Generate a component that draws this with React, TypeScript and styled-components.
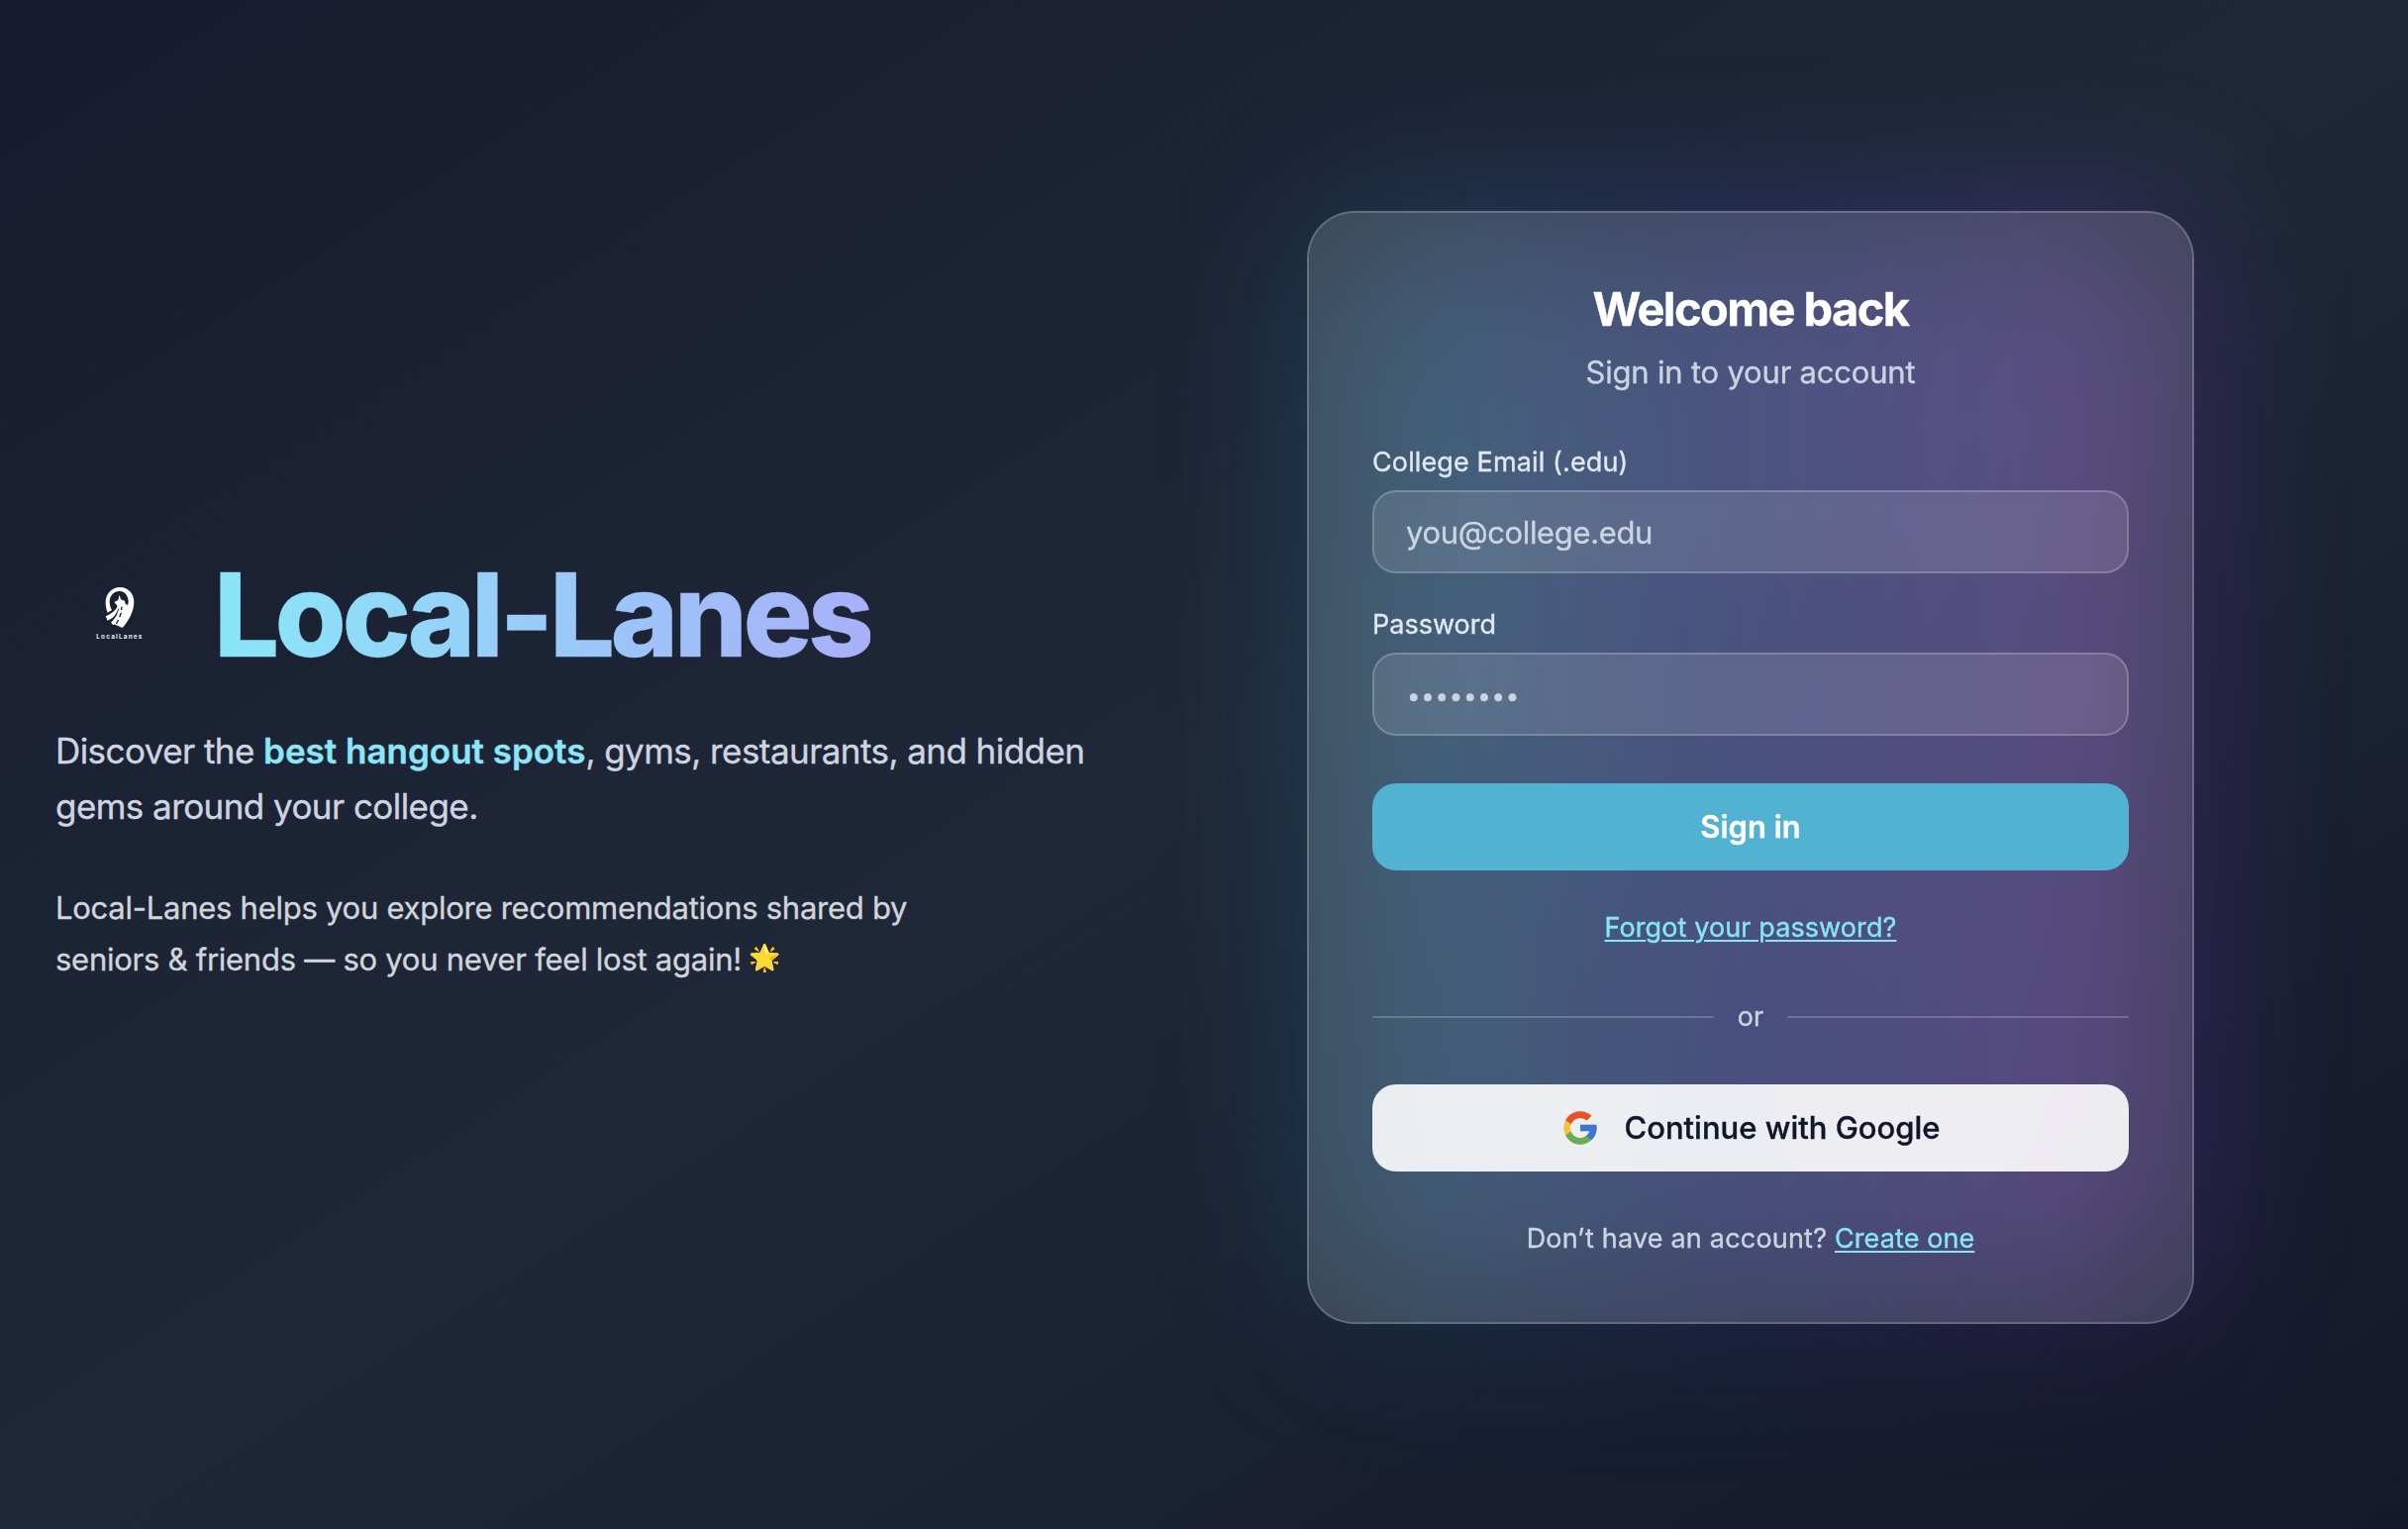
import React from "react";
import styled, { createGlobalStyle } from "styled-components";

const GlobalStyle = createGlobalStyle`
  *, *::before, *::after { box-sizing: border-box; }
  body {
    margin: 0;
    font-family: Inter, "Liberation Sans", "Noto Color Emoji", sans-serif;
    -webkit-text-stroke-width: 0.35px;
    background: #161a2e;
  }
  h1, h2, p { margin: 0; }
`;

const Page = styled.main`
  display: grid;
  grid-template-columns: 1048px 896px;
  justify-content: start;
  column-gap: 216px;
  align-items: center;
  height: 1544px;
  padding: 6px 56px 0;
  overflow: hidden;
  background: linear-gradient(to bottom right, #171b2f 0%, #1f2838 50%, #14182b 100%);
`;

const Intro = styled.section`
  display: flex;
  flex-direction: column;
  padding-top: 2px;
`;

const Brand = styled.div`
  display: flex;
  align-items: center;
  gap: 32px;
  height: 128px;
  margin-bottom: 45px;
`;

const LogoBox = styled.div`
  display: flex;
  align-items: center;
  justify-content: center;
  width: 128px;
  height: 128px;
  padding: 0 0 5px 2px;
`;

const BrandName = styled.h1`
  font-size: 117px;
  line-height: 128px;
  font-weight: 800;
  letter-spacing: -4.6px;
  color: transparent;
  background: linear-gradient(to right, #8ae6f8, #a8b0f8);
  background-clip: text;
  -webkit-background-clip: text;
`;

const Lead = styled.p`
  font-size: 35px;
  line-height: 56px;
  letter-spacing: -0.56px;
  color: #ced5e1;
  margin-bottom: 49px;
`;

const Highlight = styled.strong`
  font-weight: 600;
  letter-spacing: 0;
  color: #8ae6f8;
`;

const Blurb = styled.p`
  font-size: 31px;
  line-height: 52px;
  letter-spacing: -0.26px;
  color: #d1d5db;
`;

const Emoji = styled.span`
  font-size: 26px;
  line-height: 1;
  vertical-align: 4px;
  margin-left: -1px;
`;

const CardWrap = styled.section`
  position: relative;

  &::before {
    content: "";
    position: absolute;
    inset: 12px;
    border-radius: 48px;
    background: linear-gradient(
      to right,
      rgba(44, 204, 240, 0.23),
      rgba(84, 98, 245, 0.28) 48%,
      rgba(165, 72, 245, 0.3)
    );
    filter: blur(78px);
  }
`;

const Card = styled.div`
  position: relative;
  display: flex;
  flex-direction: column;
  height: 1124px;
  padding: 64px;
  border: 2px solid rgba(255, 255, 255, 0.2);
  border-radius: 48px;
  background: rgba(255, 255, 255, 0.14);
  backdrop-filter: blur(32px);
  box-shadow: 0 50px 100px -24px rgba(0, 0, 0, 0.22);
`;

const Header = styled.header`
  display: flex;
  flex-direction: column;
  align-items: center;
  gap: 7px;
  margin-bottom: 47px;
`;

const Heading = styled.h2`
  font-size: 47px;
  line-height: 66px;
  font-weight: 700;
  letter-spacing: -1.6px;
  color: #fff;
`;

const Subheading = styled.p`
  font-size: 31px;
  line-height: 48px;
  letter-spacing: -0.2px;
  color: #cbd5e1;
`;

const Form = styled.form`
  display: flex;
  flex-direction: column;
  gap: 32px;
  margin: 0;
`;

const Field = styled.label<{ $tracking?: number }>`
  display: flex;
  flex-direction: column;
  gap: 8px;
  font-size: 27px;
  line-height: 40px;
  letter-spacing: ${(p) => p.$tracking ?? 0}px;
  color: #e2e8f0;
`;

const Input = styled.input<{ $dots?: boolean }>`
  height: 84px;
  padding: ${(p) => (p.$dots ? "3px 32px 0 33px" : "0 32px")};
  border: 2px solid rgba(255, 255, 255, 0.2);
  border-radius: 24px;
  outline: none;
  background: rgba(255, 255, 255, 0.11);
  font-family: inherit;
  font-size: ${(p) => (p.$dots ? 24 : 31)}px;
  letter-spacing: ${(p) => (p.$dots ? 0.75 : -0.36)}px;
  color: #fff;

  &::placeholder {
    color: #cbd5e1;
    opacity: 1;
  }
`;

const Button = styled.button<{ $variant: "primary" | "light" }>`
  display: flex;
  align-items: center;
  justify-content: center;
  gap: 24px;
  width: 100%;
  height: 88px;
  padding: 0 0 1px;
  border: 0;
  border-radius: 24px;
  font-family: inherit;
  font-size: 31px;
  font-weight: ${(p) => (p.$variant === "primary" ? 600 : 500)};
  color: ${(p) => (p.$variant === "primary" ? "#fff" : "#0f172a")};
  background: ${(p) => (p.$variant === "primary" ? "#51b2d1" : "rgba(255, 255, 255, 0.9)")};
`;

const SubmitRow = styled.div`
  padding-top: 16px;
`;

const Note = styled.p<{ $before: number; $tracking: number }>`
  margin-top: ${(p) => p.$before}px;
  text-align: center;
  font-size: 27px;
  line-height: 40px;
  letter-spacing: ${(p) => p.$tracking}px;
  color: #cbd5e1;
`;

const Link = styled.a`
  color: #86e6f7;
  letter-spacing: 0.1px;
  text-decoration: underline;
  text-decoration-thickness: 2px;
  text-underline-offset: 3px;
`;

const Divider = styled.div`
  display: flex;
  align-items: center;
  gap: 24px;
  margin: 50px 0 48px;
  font-size: 27px;
  line-height: 40px;
  color: #cbd5e1;

  &::before,
  &::after {
    content: "";
    flex: 1;
    height: 2px;
    background: rgba(255, 255, 255, 0.2);
  }
`;

function Logo() {
  return (
    <svg width="54" height="62" viewBox="0 0 162 186" role="img" aria-label="Local Lanes">
      <path
        d="M44 92 C40 82 38 72 38 60 C38 34 58 15 82 15 C108 15 124 36 124 60 C124 90 106 118 91 136 Q88 139 84 136 L62 126 L82 86 L98 78 C106 70 109 60 106 50 C102 34 92 27 80 27 C62 27 50 42 50 58 C50 68 52 76 57 84 Z"
        fill="#fff"
      />
      <path d="M80 38 L84 52 L96 56 L98 66 L104 68 L104 84 L72 84 L74 72 L64 60 L76 54 Z" fill="#fff" />
      <path d="M38 103 C58 94 70 84 76 68 L92 70 L92 84 C84 104 74 118 62 130 L54 122 C64 112 72 102 76 90 C68 102 58 110 44 116 Z" fill="#fff" />
      <path d="M50 120 C62 110 72 96 78 80" stroke="#1b2134" strokeWidth="3" fill="none" />
      <path d="M87 74 L86 84 M85 92 L80 106 M77 114 L70 126" stroke="#1b2134" strokeWidth="4" fill="none" />
      <text
        x="10"
        y="170"
        textLength="138"
        lengthAdjust="spacing"
        fontFamily="Inter, sans-serif"
        fontSize="19"
        fontWeight="700"
        fill="#e8eaf0"
      >
        LocalLanes
      </text>
    </svg>
  );
}

function GoogleIcon() {
  return (
    <svg width="40" height="40" viewBox="0 0 48 48" aria-hidden="true">
      <path fill="#f5c243" d="M43.611 20.083H42V20H24v8h11.303C33.654 32.657 29.223 36 24 36c-6.627 0-12-5.373-12-12s5.373-12 12-12c3.059 0 5.842 1.154 7.961 3.039l5.657-5.657C34.046 6.053 29.268 4 24 4 12.955 4 4 12.955 4 24s8.955 20 20 20 20-8.955 20-20c0-1.341-.138-2.65-.389-3.917z" />
      <path fill="#eb5128" d="M6.306 14.691l6.571 4.819C14.655 15.108 18.961 12 24 12c3.059 0 5.842 1.154 7.961 3.039l5.657-5.657C34.046 6.053 29.268 4 24 4 16.318 4 9.656 8.337 6.306 14.691z" />
      <path fill="#67ad5b" d="M24 44c5.166 0 9.86-1.977 13.409-5.192l-6.19-5.238C29.211 35.091 26.715 36 24 36c-5.202 0-9.619-3.317-11.283-7.946l-6.522 5.025C9.505 39.556 16.227 44 24 44z" />
      <path fill="#3a76d2" d="M43.611 20.083H42V20H24v8h11.303c-.792 2.237-2.231 4.166-4.087 5.571l6.193 5.238C36.971 39.205 44 34 44 24c0-1.341-.138-2.65-.389-3.917z" />
    </svg>
  );
}

export default function App() {
  return (
    <>
      <GlobalStyle />
      <Page>
        <Intro>
          <Brand>
            <LogoBox>
              <Logo />
            </LogoBox>
            <BrandName>Local-Lanes</BrandName>
          </Brand>
          <Lead>
            Discover the <Highlight>best hangout spots</Highlight>, gyms, restaurants, and hidden
            <br />
            gems around your college.
          </Lead>
          <Blurb>
            Local-Lanes helps you explore recommendations shared by
            <br />
            seniors &amp; friends — so you never feel lost again! <Emoji>🌟</Emoji>
          </Blurb>
        </Intro>
        <CardWrap>
          <Card>
            <Header>
              <Heading>Welcome back</Heading>
              <Subheading>Sign in to your account</Subheading>
            </Header>
            <Form onSubmit={(e) => e.preventDefault()}>
              <Field $tracking={0.12}>
                College Email (.edu)
                <Input type="email" placeholder="you@college.edu" />
              </Field>
              <Field>
                Password
                <Input type="password" placeholder="••••••••" $dots />
              </Field>
              <SubmitRow>
                <Button type="submit" $variant="primary">
                  Sign in
                </Button>
              </SubmitRow>
            </Form>
            <Note $before={38} $tracking={0.1}>
              <Link>Forgot your password?</Link>
            </Note>
            <Divider>or</Divider>
            <Button type="button" $variant="light">
              <GoogleIcon />
              Continue with Google
            </Button>
            <Note $before={48} $tracking={0.2}>
              Don’t have an account? <Link>Create one</Link>
            </Note>
          </Card>
        </CardWrap>
      </Page>
    </>
  );
}
